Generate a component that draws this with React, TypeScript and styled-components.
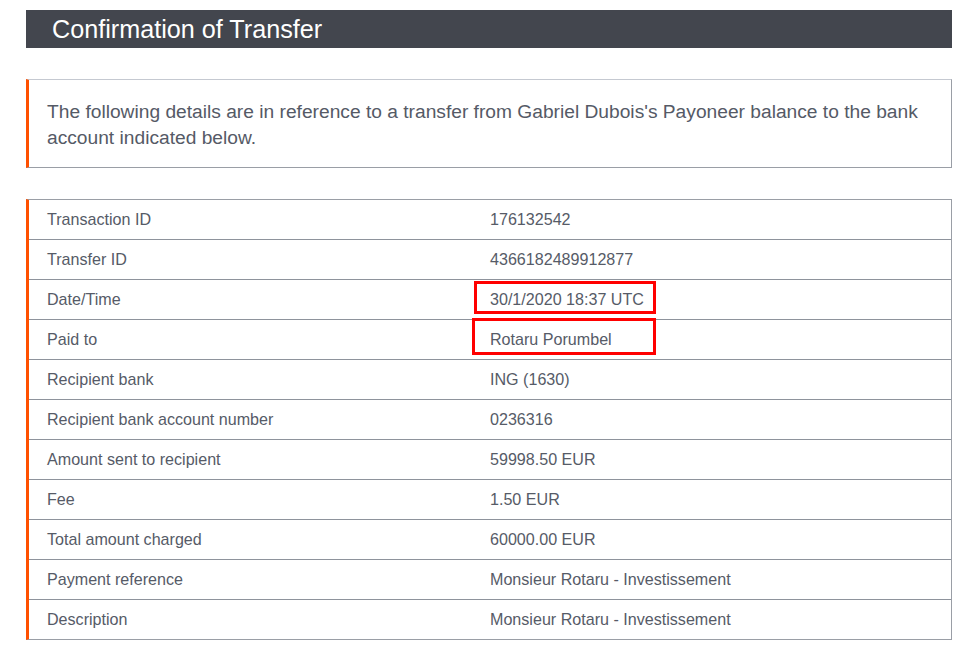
import React from "react";
import styled, { createGlobalStyle } from "styled-components";

const Global = createGlobalStyle`
  html, body { margin: 0; padding: 0; background: #ffffff; }
  body { font-family: "Liberation Sans", Arial, sans-serif; }
`;

const Page = styled.div`
  width: 926px;
  padding: 10px 0 0 26px;
  display: flex;
  flex-direction: column;
`;

const Header = styled.div`
  height: 38px;
  background: #43464e;
  display: flex;
  align-items: center;
  padding-left: 26px;
`;

const Title = styled.h1`
  margin: 0;
  font-size: 25.2px;
  font-weight: normal;
  color: #ffffff;
`;

const InfoBox = styled.div`
  margin-top: 31px;
  border: 1px solid #9a9ea6;
  border-top-color: #c5c9d1;
  border-left: 3px solid #ff5000;
  padding: 19px 18px 16px 18px;
  font-size: 19.2px;
  line-height: 26px;
  color: #555a66;
`;

const Table = styled.div`
  margin-top: 31px;
  border: 1px solid #9a9ea6;
  border-left: 3px solid #ff5000;
`;

const Row = styled.div<{ $last?: boolean }>`
  display: grid;
  grid-template-columns: 443px 1fr;
  height: 39px;
  align-items: center;
  border-bottom: ${(p) => (p.$last ? "none" : "1px solid #8e939c")};
  font-size: 16.1px;
  color: #565b67;
`;

const Label = styled.div`
  padding-left: 18px;
`;

const Value = styled.div`
  position: relative;
  align-self: stretch;
  display: flex;
  align-items: center;
  padding-left: 18px;
`;

const Highlight = styled.span<{ $left: number; $top: number; $w: number; $h: number }>`
  position: absolute;
  left: ${(p) => p.$left}px;
  top: ${(p) => p.$top}px;
  width: ${(p) => p.$w}px;
  height: ${(p) => p.$h}px;
  border: 3px solid #ff0000;
  box-sizing: border-box;
  pointer-events: none;
`;

type Item = { label: string; value: string; hl?: { left: number; top: number; w: number; h: number } };

const rows: Item[] = [
  { label: "Transaction ID", value: "176132542" },
  { label: "Transfer ID", value: "4366182489912877" },
  { label: "Date/Time", value: "30/1/2020 18:37 UTC", hl: { left: 2, top: 1, w: 182, h: 33 } },
  { label: "Paid to", value: "Rotaru Porumbel", hl: { left: 0, top: -2, w: 184, h: 37 } },
  { label: "Recipient bank", value: "ING (1630)" },
  { label: "Recipient bank account number", value: "0236316" },
  { label: "Amount sent to recipient", value: "59998.50 EUR" },
  { label: "Fee", value: "1.50 EUR" },
  { label: "Total amount charged", value: "60000.00 EUR" },
  { label: "Payment reference", value: "Monsieur Rotaru - Investissement" },
  { label: "Description", value: "Monsieur Rotaru - Investissement" },
];

export default function App() {
  return (
    <>
      <Global />
      <Page>
        <Header>
          <Title>Confirmation of Transfer</Title>
        </Header>
        <InfoBox>
          The following details are in reference to a transfer from Gabriel Dubois's Payoneer balance to the bank
          account indicated below.
        </InfoBox>
        <Table>
          {rows.map((r, i) => (
            <Row key={r.label} $last={i === rows.length - 1}>
              <Label>{r.label}</Label>
              <Value>
                {r.value}
                {r.hl && <Highlight $left={r.hl.left} $top={r.hl.top} $w={r.hl.w} $h={r.hl.h} />}
              </Value>
            </Row>
          ))}
        </Table>
      </Page>
    </>
  );
}
